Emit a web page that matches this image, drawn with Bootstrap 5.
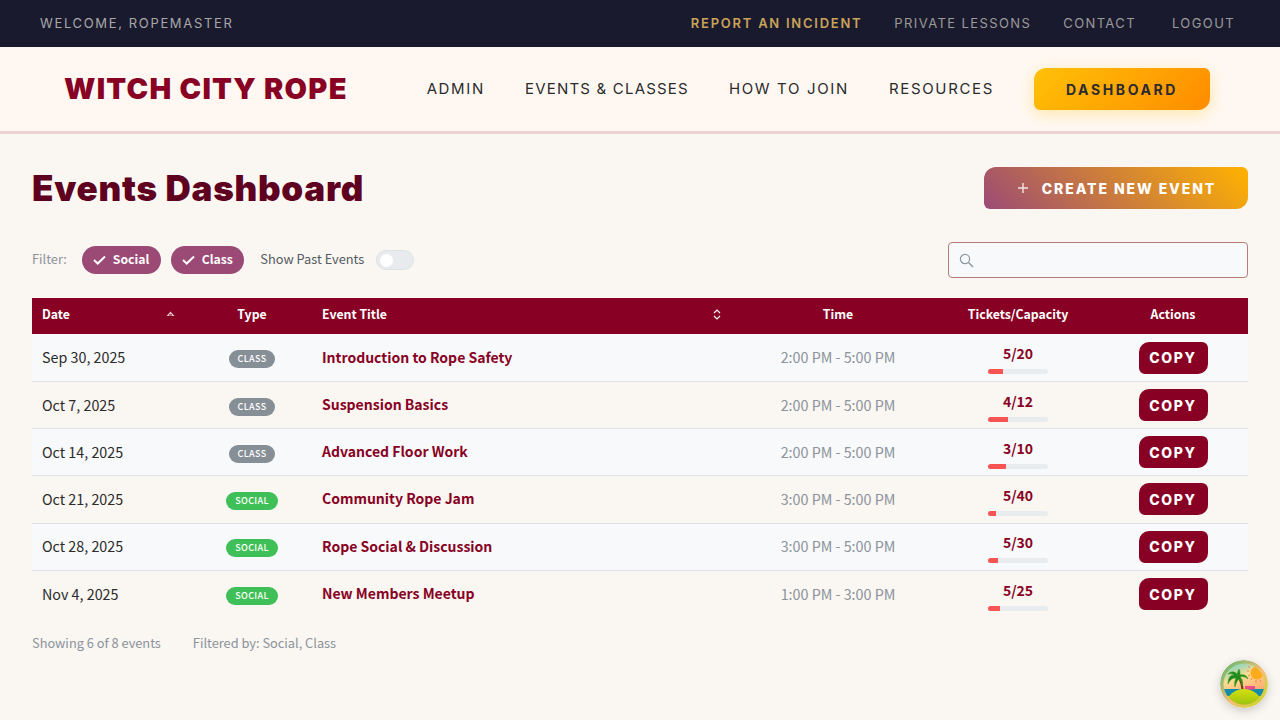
<!DOCTYPE html>
<html lang="en">
<head>
    <meta charset="UTF-8">
    <title>Events Dashboard - Witch City Rope</title>
    <link href="https://cdn.jsdelivr.net/npm/bootstrap@5.3.0/dist/css/bootstrap.min.css" rel="stylesheet">
    <style>
        body { background: #faf6f2; font-family: "Noto Sans CJK SC", "Liberation Sans", sans-serif; height: 720px; overflow: hidden; position: relative; }
        .wcr-head { font-family: Inter, "Liberation Sans", sans-serif; }
        .util-bar { background: #1a1a2e; height: 47px; padding: 0 45px 0 40px; font-size: 13px; letter-spacing: 1.4px; }
        .util-bar a { color: #9a9a9a; text-decoration: none; }
        .util-welcome { color: #a8a8a8; letter-spacing: 1.65px; }
        .util-bar a.util-report { color: #c9a35a; font-weight: 600; letter-spacing: 1.75px; margin-right: 32px; }
        .util-gap-a { margin-right: 32px; }
        .util-gap-b { margin-right: 36px; }
        .main-head { background: #fff8f2; height: 87px; border-bottom: 3px solid #eed2d2; padding: 0 70px 0 64px; }
        .brand-name { color: #880124; font-size: 29px; font-weight: 900; letter-spacing: 1.25px; text-decoration: none; }
        .main-nav { gap: 40px; }
        .main-nav a { color: #2b2b2b; font-size: 15px; letter-spacing: 1.65px; text-decoration: none; }
        .main-nav a.nav-events { letter-spacing: 1.2px; }
        .btn-dash { background: linear-gradient(135deg, #ffc107, #ff8c00); color: #2b2b2e; width: 176px; height: 42px; border: 0; border-radius: 12px 6px 12px 6px; font-size: 14px; font-weight: 700; letter-spacing: 2.6px; box-shadow: 0 4px 15px rgba(255, 191, 0, .3); }
        .page-main { padding: 33px 32px 0; }
        .page-title { color: #5f0020; font-size: 35px; font-weight: 900; letter-spacing: .75px; margin: 0; line-height: 42px; }
        .btn-create { background: linear-gradient(45deg, #9b4a75, #ffb300); color: #fff; width: 264px; height: 42px; border: 0; border-radius: 12px 6px 12px 6px; font-size: 14px; font-weight: 800; letter-spacing: 1.9px; }
        .btn-create:hover { color: #fff; }
        .filter-row { margin-top: 33px; height: 36px; font-size: 12.8px; }
        .filter-label { color: #8b939b; margin-right: 15px; padding-bottom: 2px; }
        .chip { background: #9b4a75; color: #fff; height: 28px; border-radius: 14px; padding: 0 11.5px 1px 11px; font-size: 12.2px; font-weight: 600; margin-right: 10px; gap: 7px; }
        .past-label { color: #555b61; margin-left: 6px; margin-right: 12px; padding-bottom: 2px; }
        .past-toggle { width: 38px; height: 20px; border-radius: 10px; background: #e8ebee; border: 1px solid #dee2e6; padding: 2px 3px; }
        .past-knob { width: 13px; height: 13px; border-radius: 50%; background: #fff; }
        .search-box { width: 300px; height: 36px; background: #f8f9fa; border: 1px solid #b97a7a; border-radius: 4px; padding-left: 10px; }
        .ev-table { table-layout: fixed; margin: 20px 0 0; border-collapse: collapse; }
        .ev-table th { background: #880124; color: #fff; font-size: 12.3px; font-weight: 600; height: 36.3px; padding: 0 10px 4px; border: 0; vertical-align: middle; }
        .ev-table td { height: 47.2px; padding: 0 10px 1px; vertical-align: middle; background: transparent; border-bottom: 1px solid #dee2e6; color: #2b2b2b; font-size: 14.3px; }
        .ev-table tr.row-alt td { background: #f8f9fa; }
        .ev-table tr:last-child td { border-bottom: 0; }
        .ev-table td.cell-title { color: #880124; font-size: 14px; font-weight: 600; }
        .ev-table td.cell-time { color: #8b939b; }
        .ev-table td.cell-copy { padding-bottom: 0; }
        .sort-head { padding-right: 7px; }
        .ev-type { display: inline-block; vertical-align: middle; color: #fff; font-size: 9px; font-weight: 500; letter-spacing: .35px; line-height: 18px; height: 18px; border-radius: 9px; padding: 0 8.5px; }
        .ev-class { background: #868e96; }
        .ev-social { background: #3fbf57; padding: 0 9.5px; }
        .cap-num { color: #880124; font-size: 14px; font-weight: 600; line-height: 20px; margin-top: 3px; }
        .cap-bar { width: 60px; height: 5px; margin: 6px auto 0; background: #e9ecef; border-radius: 3px; overflow: hidden; }
        .cap-fill { height: 100%; background: #f95454; }
        .btn-copy { background: #880124; color: #fff; width: 69px; height: 32px; padding: 0; border: 0; border-radius: 10px 6px 10px 6px; font-size: 14px; font-weight: 800; letter-spacing: 1.7px; }
        .btn-copy:hover { color: #fff; background: #880124; }
        .foot-note { color: #8b939b; font-size: 12.8px; margin-top: 16px; gap: 32px; }
        .float-avatar { position: absolute; right: 12px; bottom: 12px; width: 48px; height: 48px; border-radius: 50%; box-shadow: 0 3px 10px rgba(0,0,0,.18); }
    </style>
</head>
<body>
<div class="util-bar d-flex justify-content-between align-items-center wcr-head">
    <span class="util-welcome">WELCOME, ROPEMASTER</span>
    <div class="d-flex">
        <a class="util-report" href="#">REPORT AN INCIDENT</a>
        <a class="util-gap-a" href="#">PRIVATE LESSONS</a>
        <a class="util-gap-b" href="#">CONTACT</a>
        <a href="#">LOGOUT</a>
    </div>
</div>

<header class="main-head d-flex justify-content-between align-items-center wcr-head">
    <a class="brand-name" href="#">WITCH CITY ROPE</a>
    <nav class="main-nav d-flex align-items-center">
        <a href="#">ADMIN</a>
        <a class="nav-events" href="#">EVENTS &amp; CLASSES</a>
        <a href="#">HOW TO JOIN</a>
        <a href="#">RESOURCES</a>
        <button class="btn btn-dash wcr-head">DASHBOARD</button>
    </nav>
</header>

<main class="page-main">
    <div class="d-flex justify-content-between align-items-center">
        <h1 class="page-title wcr-head">Events Dashboard</h1>
        <button class="btn btn-create wcr-head d-flex align-items-center justify-content-center gap-2">
            <svg width="14" height="14" viewBox="0 0 14 14"><path d="M7 2v10M2 7h10" stroke="#f3e4e0" stroke-width="1.4"/></svg>
            <span class="ms-1">CREATE NEW EVENT</span>
        </button>
    </div>

    <div class="filter-row d-flex align-items-center justify-content-between">
        <div class="d-flex align-items-center">
            <span class="filter-label">Filter:</span>
            <span class="chip d-flex align-items-center">
                <svg width="13" height="10" viewBox="0 0 13 10"><path d="M1 5l3.700 3.500L12 1.500" fill="none" stroke="#fff" stroke-width="2"/></svg>Social
            </span>
            <span class="chip d-flex align-items-center">
                <svg width="13" height="10" viewBox="0 0 13 10"><path d="M1 5l3.700 3.500L12 1.500" fill="none" stroke="#fff" stroke-width="2"/></svg>Class
            </span>
            <span class="past-label">Show Past Events</span>
            <span class="past-toggle d-flex align-items-center"><span class="past-knob"></span></span>
        </div>
        <div class="search-box d-flex align-items-center">
            <svg width="15" height="15" viewBox="0 0 15 15"><circle cx="6" cy="6" r="4.600" fill="none" stroke="#8b969e" stroke-width="1.2"/><path d="M9.500 9.500L14 14" stroke="#8b969e" stroke-width="1.4"/></svg>
        </div>
    </div>

    <table class="table ev-table">
        <colgroup><col style="width:160px"><col style="width:120px"><col style="width:426px"><col style="width:200px"><col style="width:160px"><col style="width:150px"></colgroup>
        <thead>
            <tr>
                <th><div class="d-flex justify-content-between align-items-center sort-head">Date
                    <svg width="9" height="6" viewBox="0 0 9 6"><path d="M4.500 .5L8.500 5H.5z" fill="#fff" fill-opacity=".75"/><path d="M3 4h3" stroke="#880124"/></svg></div></th>
                <th class="text-center">Type</th>
                <th><div class="d-flex justify-content-between align-items-center sort-head">Event Title
                    <svg width="8" height="11" viewBox="0 0 8 11"><path d="M1 4l3-3 3 3M1 7l3 3 3-3" fill="none" stroke="#fff" stroke-width="1.1"/></svg></div></th>
                <th class="text-center">Time</th>
                <th class="text-center">Tickets/Capacity</th>
                <th class="text-center">Actions</th>
            </tr>
        </thead>
        <tbody id="eventRows"></tbody>
    </table>

    <div class="foot-note d-flex">
        <span>Showing 6 of 8 events</span>
        <span>Filtered by: Social, Class</span>
    </div>
</main>

<svg class="float-avatar" viewBox="0 0 48 48">
    <defs>
        <linearGradient id="skyFill" x1=".3" y1="0" x2=".7" y2="1"><stop offset="0" stop-color="#62d3cf"/><stop offset=".35" stop-color="#fddc92"/><stop offset=".8" stop-color="#ffa06c"/></linearGradient>
        <linearGradient id="ringFill" x1="0" y1="0" x2="1" y2="1"><stop offset="0" stop-color="#4fb868"/><stop offset=".55" stop-color="#f7bd78"/><stop offset="1" stop-color="#b8e010"/></linearGradient>
        <linearGradient id="hillFill" x1="0" y1="0" x2="0" y2="1"><stop offset="0" stop-color="#d6e010"/><stop offset="1" stop-color="#5ea50a"/></linearGradient>
        <clipPath id="innerClip"><circle cx="24" cy="24" r="20.500"/></clipPath>
    </defs>
    <circle cx="24" cy="24" r="24" fill="url(#ringFill)"/>
    <g clip-path="url(#innerClip)">
        <rect width="48" height="48" fill="url(#skyFill)"/>
        <circle cx="37" cy="13" r="6.500" fill="#fbab1c"/>
        <path d="M28 6l2 2M27 11h2M28 16l2-1M31 20l1-2M36 23l0-3M41 22l-1-2" stroke="#f08a3c" stroke-width="1"/>
        <rect y="29" width="48" height="7" fill="#128ca8"/>
        <rect x="25" y="26" width="10" height="3.500" fill="#ee4f8b"/>
        <path d="M23 32c-.5-6-1.500-10-4-15" fill="none" stroke="#7a3f14" stroke-width="2.200"/>
        <path d="M18 15c-3-4-7-4-10-1 3-.5 5 0 6 1-4 0-6 3-6 9 2-4 4-6 8-6-1 2-2 5-1 9 1-4 2-6 4-8 2 1 3 4 3 7 1.500-4 0-7-2-9 3-1 6 0 8 2-1-4-5-5-8-4 0-2 0-4-1-6-1 2-2 4-2 7z" fill="#1f8a1e" stroke="#3da02a" stroke-width=".6"/>
        <ellipse cx="24" cy="45" rx="18" ry="16" fill="url(#hillFill)"/>
    </g>
</svg>

<script>
const events = [
    ['Sep 30, 2025', 'class', 'Introduction to Rope Safety', '2:00 PM - 5:00 PM', 5, 20],
    ['Oct 7, 2025', 'class', 'Suspension Basics', '2:00 PM - 5:00 PM', 4, 12],
    ['Oct 14, 2025', 'class', 'Advanced Floor Work', '2:00 PM - 5:00 PM', 3, 10],
    ['Oct 21, 2025', 'social', 'Community Rope Jam', '3:00 PM - 5:00 PM', 5, 40],
    ['Oct 28, 2025', 'social', 'Rope Social &amp; Discussion', '3:00 PM - 5:00 PM', 5, 30],
    ['Nov 4, 2025', 'social', 'New Members Meetup', '1:00 PM - 3:00 PM', 5, 25]
];
document.getElementById('eventRows').innerHTML = events.map((ev, i) => `
    <tr class="${i % 2 === 0 ? 'row-alt' : ''}">
        <td>${ev[0]}</td>
        <td class="text-center"><span class="ev-type ev-${ev[1]}">${ev[1].toUpperCase()}</span></td>
        <td class="cell-title">${ev[2]}</td>
        <td class="cell-time text-center">${ev[3]}</td>
        <td class="text-center"><div class="cap-num">${ev[4]}/${ev[5]}</div>
            <div class="cap-bar"><div class="cap-fill" style="width:${ev[4] / ev[5] * 100}%"></div></div></td>
        <td class="text-center cell-copy"><button class="btn btn-copy wcr-head">COPY</button></td>
    </tr>`).join('');
</script>
<script src="https://cdn.jsdelivr.net/npm/bootstrap@5.3.0/dist/js/bootstrap.bundle.min.js"></script>
</body>
</html>
